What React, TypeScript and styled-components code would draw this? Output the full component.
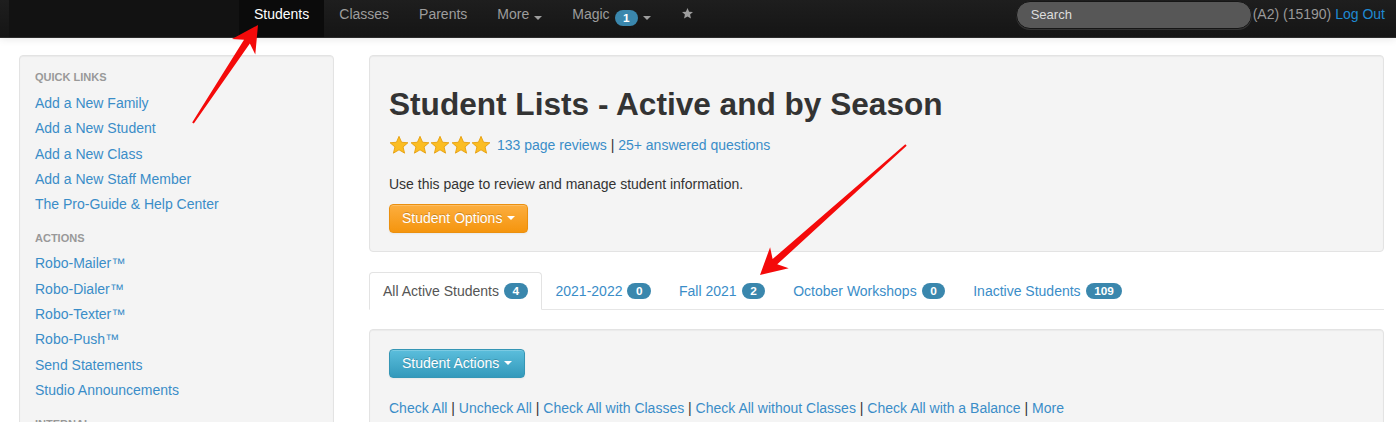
import React from 'react';
import styled, { createGlobalStyle } from 'styled-components';

const GlobalStyle = createGlobalStyle`
  html, body {
    margin: 0;
    padding: 0;
    background: #fff;
    overflow: hidden;
  }
  body {
    font-family: "Liberation Sans", Arial, Helvetica, sans-serif;
    font-size: 14px;
    color: #333;
  }
  a {
    color: #3a8dc8;
    text-decoration: none;
  }
`;

const Page = styled.div`
  position: relative;
  width: 1396px;
  height: 422px;
  overflow: hidden;
`;

const NavBar = styled.header`
  display: flex;
  align-items: stretch;
  height: 37px;
  padding: 0 11px 0 9px;
  background: linear-gradient(to bottom, #1e1e1e, #151515);
  border-bottom: 1px solid #2c2c2c;
  box-shadow: 0 1px 8px rgba(0, 0, 0, 0.1);
`;

const Brand = styled.div`
  width: 230px;
  background: #121212;
`;

const NavItem = styled.a<{ $active?: boolean }>`
  display: flex;
  align-items: flex-start;
  gap: 5px;
  padding: 0 15px;
  line-height: 28px;
  font-size: 14px;
  color: ${p => (p.$active ? '#fff' : '#9d9d9d')};
  background: ${p => (p.$active ? '#0b0b0b' : 'transparent')};
`;

const Caret = styled.span<{ $color?: string }>`
  display: inline-block;
  align-self: center;
  margin-top: -1px;
  width: 0;
  height: 0;
  border-left: 4px solid transparent;
  border-right: 4px solid transparent;
  border-top: 4px solid ${p => p.$color || '#9d9d9d'};
`;

const NavBadge = styled.span`
  align-self: center;
  margin-top: -1px;
  display: inline-block;
  padding: 1px 8.5px;
  line-height: 14px;
  font-size: 11.8px;
  font-weight: bold;
  color: #fff;
  background: #3a87ad;
  border-radius: 9px;
`;

const SearchBox = styled.div`
  margin: 1px 0 0 auto;
  width: 220px;
  height: 26px;
  padding-left: 14px;
  line-height: 26px;
  font-size: 13px;
  color: #ddd;
  background: #575757;
  border: 1px solid #161616;
  border-radius: 14px;
  box-shadow: 0 1px 0 rgba(255, 255, 255, 0.12);
`;

const UserInfo = styled.div`
  line-height: 28px;
  font-size: 14px;
  color: #999;
  padding-left: 1px;

  a {
    color: #1f8ad3;
  }
`;

const Layout = styled.div`
  display: grid;
  grid-template-columns: 315px 1fr;
  gap: 35px;
  padding: 17px 12px 0 19px;
  align-items: start;
`;

const Well = styled.div`
  background: #f4f4f4;
  border: 1px solid #e3e3e3;
  border-radius: 4px;
  box-shadow: inset 0 1px 1px rgba(0, 0, 0, 0.04);
`;

const SideWell = styled(Well)`
  padding: 11px 15px 30px;
`;

const NavHeader = styled.div<{ $first?: boolean }>`
  font-size: 11px;
  font-weight: bold;
  color: #999;
  text-transform: uppercase;
  line-height: 20px;
  margin: ${p => (p.$first ? '0' : '11px')} 0 ${p => (p.$first ? '4px' : '3px')};
`;

const SideLink = styled.a`
  display: block;
  line-height: 25.3px;
  font-size: 14px;
`;

const Main = styled.main`
  display: flex;
  flex-direction: column;
`;

const Hero = styled(Well)`
  padding: 30px 19px 18px;
`;

const Title = styled.h1`
  margin: 0;
  font-size: 31.6px;
  line-height: 36px;
  font-weight: bold;
  color: #333;
`;

const Reviews = styled.div`
  display: flex;
  align-items: center;
  gap: 6px;
  margin-top: 13px;
  line-height: 20px;
  font-size: 14px;
`;

const Stars = styled.div`
  display: flex;
  gap: 0.5px;
`;

const Sep = styled.span`
  color: #333;
`;

const Lead = styled.p`
  margin: 19px 0 0;
  line-height: 20px;
  font-size: 14px;
  color: #333;
`;

const Button = styled.button<{ $kind: 'warning' | 'info' }>`
  display: inline-flex;
  align-items: center;
  gap: 5px;
  align-self: flex-start;
  margin-top: 10px;
  padding: 4px 12px;
  line-height: 19px;
  font-family: inherit;
  font-size: 14px;
  color: #fff;
  border-radius: 4px;
  cursor: pointer;
  text-shadow: 0 -1px 0 rgba(0, 0, 0, 0.2);
  background: ${p =>
    p.$kind === 'warning'
      ? 'linear-gradient(to bottom, #fcae3f, #f5950e)'
      : 'linear-gradient(to bottom, #5bbedc, #3399bb)'};
  border: 1px solid ${p => (p.$kind === 'warning' ? '#eb900f' : '#3596b5')};
  box-shadow: inset 0 1px 0 rgba(255, 255, 255, 0.2), 0 1px 2px rgba(0, 0, 0, 0.05);
`;

const HeroBody = styled.div`
  display: flex;
  flex-direction: column;
`;

const Tabs = styled.ul`
  display: flex;
  margin: 20px 0 0;
  padding: 0;
  list-style: none;
  border-bottom: 1px solid #e6e6e6;
`;

const Tab = styled.li<{ $active?: boolean }>`
  display: flex;
  align-items: center;
  gap: 5px;
  height: 36px;
  padding: 0 13px;
  margin-bottom: -1px;
  font-size: 14px;
  color: ${p => (p.$active ? '#555' : '#3a8dc8')};
  background: ${p => (p.$active ? '#fff' : 'transparent')};
  border: 1px solid ${p => (p.$active ? '#e3e3e3' : 'transparent')};
  border-bottom-color: ${p => (p.$active ? '#fff' : 'transparent')};
  border-radius: 4px 4px 0 0;
`;

const Badge = styled.span`
  display: inline-block;
  padding: 1px 8.5px;
  line-height: 14px;
  font-size: 11.8px;
  font-weight: bold;
  color: #fff;
  background: #3a87ad;
  border-radius: 9px;
`;

const ListWell = styled(Well)`
  margin-top: 19px;
  padding: 19px 19px 30px;
  display: flex;
  flex-direction: column;
`;

const CheckLinks = styled.div`
  margin-top: 20px;
  line-height: 20px;
  font-size: 14px;
  color: #333;
`;

const Overlay = styled.svg`
  position: absolute;
  left: 0;
  top: 0;
  pointer-events: none;
`;

const Star = () => (
  <svg width="20" height="20" viewBox="0 0 24 24">
    <path
      d="M12 1.6l3.1 7.1 7.6.6-5.8 5 1.8 7.5L12 17.8l-6.7 4 1.8-7.5-5.8-5 7.6-.6z"
      fill="#fbbd22"
      stroke="#e49b06"
      strokeWidth="1"
      strokeLinejoin="round"
    />
  </svg>
);

function arrowPoints(x1: number, y1: number, x2: number, y2: number) {
  const dx = x2 - x1;
  const dy = y2 - y1;
  const len = Math.hypot(dx, dy);
  const ux = dx / len;
  const uy = dy / len;
  const nx = -uy;
  const ny = ux;
  const headLen = 26;
  const headW = 14;
  const bx = x2 - ux * headLen;
  const by = y2 - uy * headLen;
  const jx = bx + ux * 6;
  const jy = by + uy * 6;
  const pts = [
    [x1 + nx * 1, y1 + ny * 1],
    [jx + nx * 3.5, jy + ny * 3.5],
    [bx + nx * headW, by + ny * headW],
    [x2, y2],
    [bx - nx * headW, by - ny * headW],
    [jx - nx * 3.5, jy - ny * 3.5],
    [x1 - nx * 1, y1 - ny * 1]
  ];
  return pts.map(p => p.join(',')).join(' ');
}

const quickLinks = [
  'Add a New Family',
  'Add a New Student',
  'Add a New Class',
  'Add a New Staff Member',
  'The Pro-Guide & Help Center'
];

const actionLinks = [
  'Robo-Mailer™',
  'Robo-Dialer™',
  'Robo-Texter™',
  'Robo-Push™',
  'Send Statements',
  'Studio Announcements'
];

const internalLinks = ['Studio Settings', 'Reports'];

const tabs = [
  { label: 'All Active Students', count: 4 },
  { label: '2021-2022', count: 0 },
  { label: 'Fall 2021', count: 2 },
  { label: 'October Workshops', count: 0 },
  { label: 'Inactive Students', count: 109 }
];

const checkLinks = [
  'Check All',
  'Uncheck All',
  'Check All with Classes',
  'Check All without Classes',
  'Check All with a Balance',
  'More'
];

export default function App() {
  return (
    <Page>
      <GlobalStyle />
      <NavBar>
        <Brand />
        <NavItem $active>Students</NavItem>
        <NavItem>Classes</NavItem>
        <NavItem>Parents</NavItem>
        <NavItem>
          More <Caret />
        </NavItem>
        <NavItem>
          Magic
          <NavBadge>1</NavBadge>
          <Caret />
        </NavItem>
        <NavItem>
          <svg width="13" height="28" viewBox="0 0 24 52">
            <path
              d="M12 15l3 6.6 7.2.7-5.4 4.8 1.6 7.1L12 30.5l-6.4 3.7 1.6-7.1-5.4-4.8 7.2-.7z"
              fill="#9d9d9d"
            />
          </svg>
        </NavItem>
        <SearchBox>Search</SearchBox>
        <UserInfo>
          (A2) (15190) <a>Log Out</a>
        </UserInfo>
      </NavBar>

      <Layout>
        <SideWell>
          <NavHeader $first>Quick Links</NavHeader>
          {quickLinks.map(l => (
            <SideLink key={l}>{l}</SideLink>
          ))}
          <NavHeader>Actions</NavHeader>
          {actionLinks.map(l => (
            <SideLink key={l}>{l}</SideLink>
          ))}
          <NavHeader>Internal</NavHeader>
          {internalLinks.map(l => (
            <SideLink key={l}>{l}</SideLink>
          ))}
        </SideWell>

        <Main>
          <Hero>
            <HeroBody>
              <Title>Student Lists - Active and by Season</Title>
              <Reviews>
                <Stars>
                  {[0, 1, 2, 3, 4].map(i => (
                    <Star key={i} />
                  ))}
                </Stars>
                <span>
                  <a>133 page reviews</a> <Sep>|</Sep> <a>25+ answered questions</a>
                </span>
              </Reviews>
              <Lead>Use this page to review and manage student information.</Lead>
              <Button $kind="warning">
                Student Options <Caret $color="#fff" />
              </Button>
            </HeroBody>
          </Hero>

          <Tabs>
            {tabs.map((t, i) => (
              <Tab key={t.label} $active={i === 0}>
                {t.label}
                <Badge>{t.count}</Badge>
              </Tab>
            ))}
          </Tabs>

          <ListWell>
            <Button $kind="info" style={{ marginTop: 0 }}>
              Student Actions <Caret $color="#fff" />
            </Button>
            <CheckLinks>
              {checkLinks.map((l, i) => (
                <React.Fragment key={l}>
                  {i > 0 && ' | '}
                  <a>{l}</a>
                </React.Fragment>
              ))}
            </CheckLinks>
          </ListWell>
        </Main>
      </Layout>

      <Overlay width="1396" height="422">
        <polygon points={arrowPoints(193, 123, 258, 25)} fill="#f40a0a" />
        <polygon points={arrowPoints(906, 145, 760, 275)} fill="#f40a0a" />
      </Overlay>
    </Page>
  );
}
